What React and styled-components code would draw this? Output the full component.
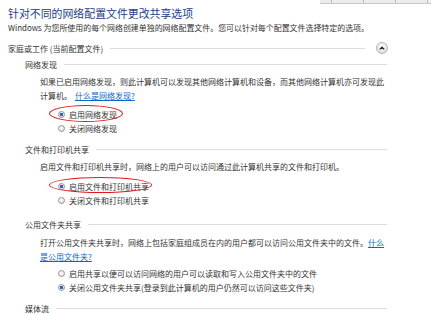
import styled, { createGlobalStyle } from 'styled-components';

const GlobalStyle = createGlobalStyle`
  html, body {
    margin: 0;
    padding: 0;
    background: #ffffff;
  }
  body {
    font-family: "Noto Sans CJK SC", "Noto Sans", "Liberation Sans", sans-serif;
    color: #333333;
    overflow: hidden;
  }
`;

const Page = styled.div`
  width: 431px;
  height: 315px;
  overflow: hidden;
  position: relative;
`;

const TabStrip = styled.div`
  display: flex;
  width: 111px;
  height: 3px;
  margin-left: auto;
  background: #ececec;
  border-bottom: 1px solid #c8c8c8;
`;

const TabCell = styled.div`
  width: ${({ $w }) => $w}px;
  border-right: ${({ $last }) => ($last ? 'none' : '1px solid #bdbdbd')};
`;

const Title = styled.h1`
  margin: 1px 0 0 8px;
  font-size: 10.9px;
  line-height: 16px;
  font-weight: normal;
  color: #1e3c8c;
  white-space: nowrap;
`;

const Intro = styled.p`
  margin: 0 0 0 8px;
  font-size: 7.95px;
  line-height: 14px;
  white-space: nowrap;
`;

const HeaderRow = styled.div`
  display: flex;
  align-items: center;
  gap: 7px;
  margin-top: ${({ $top }) => $top}px;
  margin-left: ${({ $indent }) => $indent}px;
  width: ${({ $width }) => $width}px;
  height: 14px;
  font-size: 8px;
  white-space: nowrap;
`;

const Rule = styled.div`
  flex: 1;
  height: 1px;
  background: #dcdcdc;
`;

const CollapseButton = styled.div`
  width: 10px;
  height: 10px;
  margin-left: 4px;
  border-radius: 50%;
  border: 1px solid #b4b4b4;
  background: radial-gradient(circle at 50% 35%, #ffffff 0%, #e6e6e6 60%, #cfcfcf 100%);
  display: flex;
  align-items: center;
  justify-content: center;
`;

const Paragraph = styled.p`
  margin: ${({ $top }) => $top}px 0 0 40px;
  font-size: 8px;
  line-height: 14px;
  white-space: nowrap;
`;

const HelpLink = styled.a`
  color: #0a66cc;
  text-decoration: underline;
  margin-left: ${({ $gap }) => ($gap ? '3px' : '0')};
`;

const RadioList = styled.div`
  margin: ${({ $top }) => $top}px 0 0 40px;
  display: flex;
  flex-direction: column;
`;

const RadioRow = styled.label`
  position: relative;
  display: flex;
  align-items: center;
  height: 14px;
  padding-left: 18px;
  gap: 4px;
  font-size: 8px;
  white-space: nowrap;
`;

const RadioDot = styled.span`
  width: 5px;
  height: 5px;
  border-radius: 50%;
  border: 1px solid #929393;
  background: ${({ $checked }) =>
    $checked
      ? 'radial-gradient(circle, #1f4f9c 0%, #3a74c4 40%, #dfe7f2 55%, #f4f4f4 100%)'
      : 'radial-gradient(circle at 40% 35%, #ffffff 0%, #e4e4e4 70%, #cfcfcf 100%)'};
  flex-shrink: 0;
`;

const Highlight = styled.span`
  position: absolute;
  left: ${({ $left }) => $left}px;
  top: ${({ $top }) => $top}px;
  width: ${({ $w }) => $w}px;
  height: ${({ $h }) => $h}px;
  border: 1.6px solid #e5171d;
  border-radius: 50%;
  box-sizing: border-box;
  pointer-events: none;
`;

function Radio({ checked, children, mark }) {
  return (
    <RadioRow>
      <RadioDot $checked={checked} />
      {children}
      {mark && <Highlight $left={mark.left} $w={mark.w} $h={mark.h} $top={mark.top} />}
    </RadioRow>
  );
}

const App = () => {
  return (
    <Page>
      <GlobalStyle />
      <TabStrip>
        <TabCell $w={11} />
        <TabCell $w={31} />
        <TabCell $w={31} />
        <TabCell $w={31} />
        <TabCell $w={3} $last />
      </TabStrip>

      <Title>针对不同的网络配置文件更改共享选项</Title>
      <Intro>Windows 为您所使用的每个网络创建单独的网络配置文件。您可以针对每个配置文件选择特定的选项。</Intro>

      <HeaderRow $top={6} $indent={8} $width={380}>
        家庭或工作 (当前配置文件)
        <Rule />
        <CollapseButton>
          <svg width="6" height="4" viewBox="0 0 6 4">
            <path d="M0.8 3.4 L3 1.2 L5.2 3.4" fill="none" stroke="#2b2b2b" strokeWidth="1.3" />
          </svg>
        </CollapseButton>
      </HeaderRow>

      <HeaderRow $top={2} $indent={25} $width={362}>
        网络发现
        <Rule />
      </HeaderRow>
      <Paragraph $top={4}>
        如果已启用网络发现，则此计算机可以发现其他网络计算机和设备，而其他网络计算机亦可发现此
        <br />
        计算机。<HelpLink $gap href="#">什么是网络发现?</HelpLink>
      </Paragraph>
      <RadioList $top={4}>
        <Radio checked mark={{ left: 9, w: 74, h: 17, top: -2 }}>启用网络发现</Radio>
        <Radio>关闭网络发现</Radio>
      </RadioList>

      <HeaderRow $top={7} $indent={25} $width={362}>
        文件和打印机共享
        <Rule />
      </HeaderRow>
      <Paragraph $top={4}>
        启用文件和打印机共享时，网络上的用户可以访问通过此计算机共享的文件和打印机。
      </Paragraph>
      <RadioList $top={5}>
        <Radio checked mark={{ left: 9, w: 103, h: 16, top: -2 }}>启用文件和打印机共享</Radio>
        <Radio>关闭文件和打印机共享</Radio>
      </RadioList>

      <HeaderRow $top={10} $indent={25} $width={362}>
        公用文件夹共享
        <Rule />
      </HeaderRow>
      <Paragraph $top={5}>
        打开公用文件夹共享时，网络上包括家庭组成员在内的用户都可以访问公用文件夹中的文件。
        <HelpLink href="#">
          什么
          <br />
          是公用文件夹?
        </HelpLink>
      </Paragraph>
      <RadioList $top={2}>
        <Radio>启用共享以便可以访问网络的用户可以读取和写入公用文件夹中的文件</Radio>
        <Radio checked>关闭公用文件夹共享(登录到此计算机的用户仍然可以访问这些文件夹)</Radio>
      </RadioList>

      <HeaderRow $top={7} $indent={25} $width={362}>
        媒体流
        <Rule />
      </HeaderRow>
    </Page>
  );
};

export default App;
